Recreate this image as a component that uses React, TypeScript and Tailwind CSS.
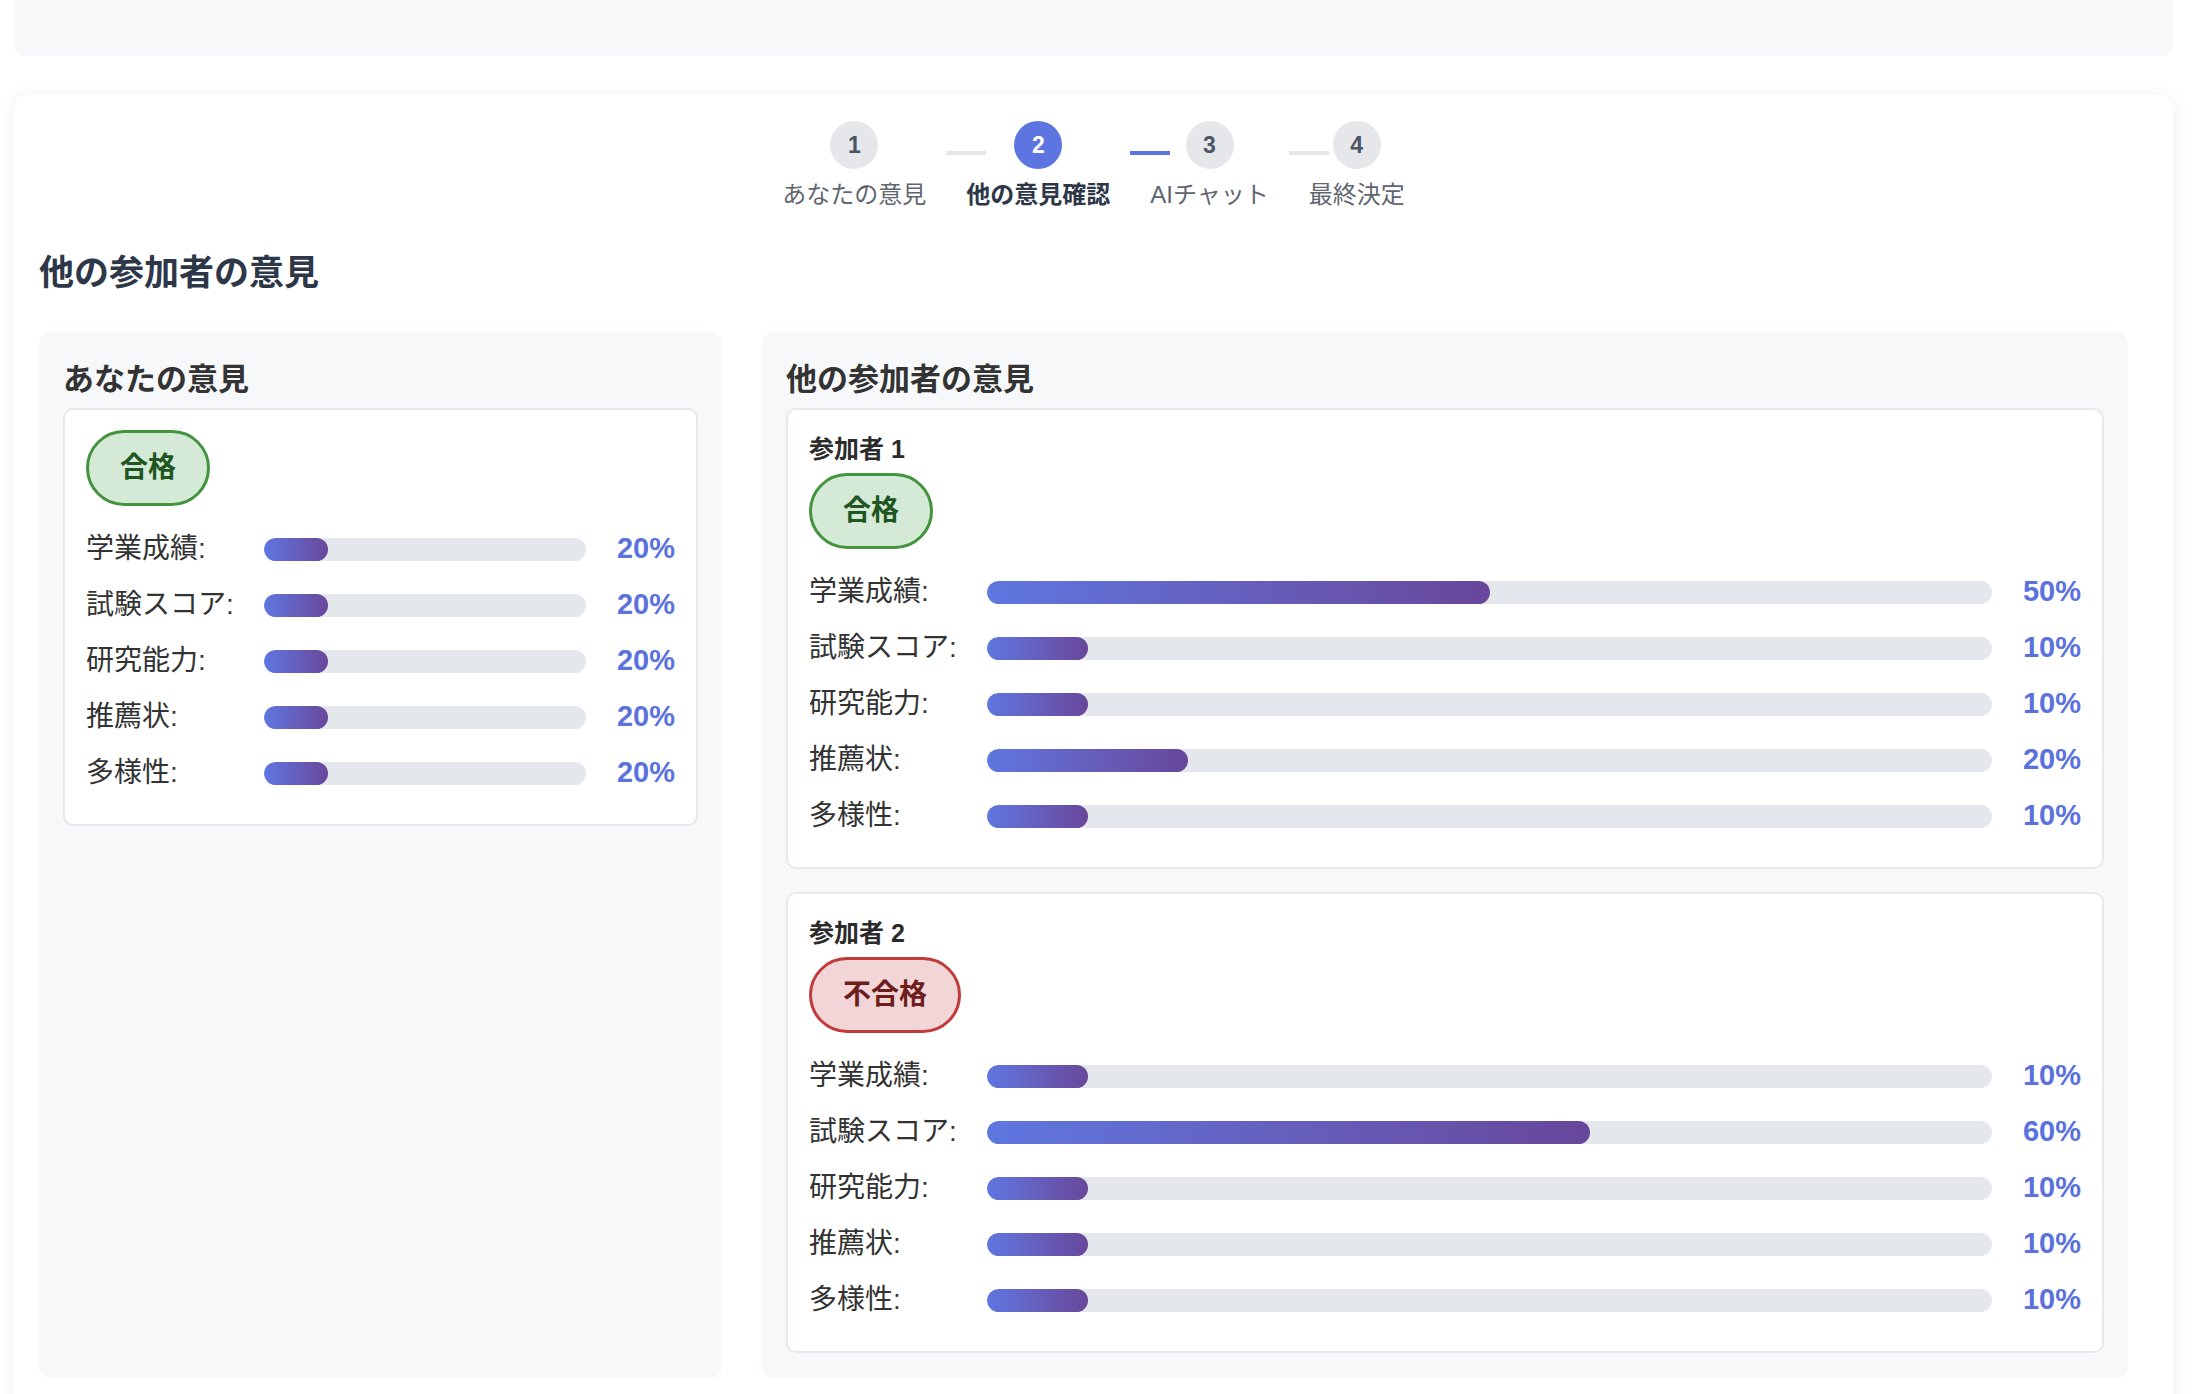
import React from "react";

type Scores = {
  academic: number;
  exam: number;
  research: number;
  recommendation: number;
  diversity: number;
};

type Opinion = {
  pass: boolean;
  scores: Scores;
};

const criteria: { key: keyof Scores; label: string }[] = [
  { key: "academic", label: "学業成績:" },
  { key: "exam", label: "試験スコア:" },
  { key: "research", label: "研究能力:" },
  { key: "recommendation", label: "推薦状:" },
  { key: "diversity", label: "多様性:" },
];

const steps = ["あなたの意見", "他の意見確認", "AIチャット", "最終決定"];

const myOpinion: Opinion = {
  pass: true,
  scores: { academic: 20, exam: 20, research: 20, recommendation: 20, diversity: 20 },
};

const others: Opinion[] = [
  {
    pass: true,
    scores: { academic: 50, exam: 10, research: 10, recommendation: 20, diversity: 10 },
  },
  {
    pass: false,
    scores: { academic: 10, exam: 60, research: 10, recommendation: 10, diversity: 10 },
  },
];

const fontStack = {
  fontFamily: '"Liberation Sans", "Noto Sans CJK JP", sans-serif',
};

function Stepper({ current }: { current: number }) {
  return (
    <div className="flex items-start justify-center">
      {steps.map((label, i) => {
        const n = i + 1;
        const active = n === current;
        return (
          <React.Fragment key={label}>
            {i > 0 && (
              <div
                className={
                  "ml-[20px] mr-[-20px] mt-[30px] h-[4px] w-[40px] shrink-0 " +
                  (n - 1 <= current && n > current ? "bg-[#5c75e0]" : "bg-[#e5e7eb]")
                }
              />
            )}
            <div className="flex flex-col items-center">
              <div
                className={
                  "flex h-[48px] w-[48px] items-center justify-center rounded-full text-[23px] font-bold " +
                  (active ? "bg-[#5c75e0] text-white" : "bg-[#e5e7eb] text-[#4b5563]")
                }
              >
                {n}
              </div>
              <div
                className={
                  "mt-[8px] whitespace-nowrap text-[24px] leading-[36px] " +
                  (active ? "font-bold text-[#2d3748]" : "text-[#5f6670]")
                }
              >
                {label}
              </div>
            </div>
          </React.Fragment>
        );
      })}
    </div>
  );
}

function Badge({ pass }: { pass: boolean }) {
  return (
    <div
      className={
        "inline-flex rounded-full border-[3px] px-[31px] py-[14px] text-[28px] font-bold leading-[42px] " +
        (pass
          ? "border-[#43933f] bg-[#d5ead6] text-[#1f5522]"
          : "border-[#c13b3b] bg-[#f1d5d7] text-[#6e1d1d]")
      }
    >
      {pass ? "合格" : "不合格"}
    </div>
  );
}

function ScoreRows({ scores }: { scores: Scores }) {
  return (
    <div className="flex flex-col gap-[14px]">
      {criteria.map((c) => (
        <div key={c.key} className="flex h-[42px] items-center">
          <div className="w-[165px] shrink-0 whitespace-nowrap text-[28px] text-[#333333]">
            {c.label}
          </div>
          <div className="ml-[13px] h-[23px] flex-1 overflow-hidden rounded-full bg-[#e4e8ec]">
            <div
              className="h-full rounded-full bg-gradient-to-r from-[#5e77e0] to-[#67479b]"
              style={{ width: `${scores[c.key]}%` }}
            />
          </div>
          <div className="ml-[14px] w-[75px] shrink-0 text-right text-[29px] font-bold text-[#5b72dd]">
            {scores[c.key]}%
          </div>
        </div>
      ))}
    </div>
  );
}

function OpinionCard({ title, opinion }: { title?: string; opinion: Opinion }) {
  return (
    <div className="rounded-[10px] border-2 border-[#e6e8eb] bg-white px-[21px] pb-[30px] pt-[20px]">
      {title && (
        <div className="mb-[5px] text-[25px] font-bold leading-[38px] text-[#2b2b2b]">{title}</div>
      )}
      <div className="mb-[22px]">
        <Badge pass={opinion.pass} />
      </div>
      <ScoreRows scores={opinion.scores} />
    </div>
  );
}

export default function App() {
  return (
    <div className="min-h-screen bg-white pl-[14px] pr-[25px]" style={fontStack}>
      <div className="h-[56px] rounded-b-[12px] bg-[#f7f8fa]" />

      <div className="mt-[39px] rounded-[12px] bg-white px-[25px] pb-[40px] pt-[26px] shadow-[0_2px_18px_rgba(0,0,0,0.07)]">
        <Stepper current={2} />

        <h2 className="mt-[36px] text-[35px] font-bold leading-[48px] text-[#2d3748]">
          他の参加者の意見
        </h2>

        <div className="mr-[20px] mt-[35px] grid grid-cols-[1fr_2fr] gap-[40px]">
          <div className="rounded-[12px] bg-[#f7f8fa] px-[24px] pb-[25px] pt-[24px]">
            <h3 className="mb-[4px] text-[31px] font-bold leading-[48px] text-[#333333]">
              あなたの意見
            </h3>
            <OpinionCard opinion={myOpinion} />
          </div>

          <div className="rounded-[12px] bg-[#f7f8fa] px-[24px] pb-[25px] pt-[24px]">
            <h3 className="mb-[4px] text-[31px] font-bold leading-[48px] text-[#333333]">
              他の参加者の意見
            </h3>
            <div className="flex flex-col gap-[23px]">
              {others.map((o, i) => (
                <OpinionCard key={i} title={`参加者 ${i + 1}`} opinion={o} />
              ))}
            </div>
          </div>
        </div>
      </div>
    </div>
  );
}
